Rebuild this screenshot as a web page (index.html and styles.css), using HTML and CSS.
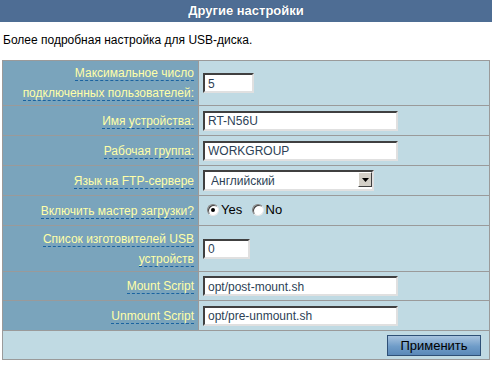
FILE: index.html
```html
<!DOCTYPE html>
<html lang="ru">
<head>
<meta charset="utf-8">
<link rel="stylesheet" href="styles.css">
</head>
<body>
<div class="header">Другие настройки</div>
<p class="desc">Более подробная настройка для USB-диска.</p>
<table class="form">
  <tr class="r1">
    <th><span class="lbl">Максимальное число подключенных пользователей:</span></th>
    <td><input class="txt w-s" type="text" value="5"></td>
  </tr>
  <tr class="r2">
    <th><span class="lbl">Имя устройства:</span></th>
    <td><input class="txt w-l" type="text" value="RT-N56U"></td>
  </tr>
  <tr class="r3">
    <th><span class="lbl">Рабочая группа:</span></th>
    <td><input class="txt w-l" type="text" value="WORKGROUP"></td>
  </tr>
  <tr class="r4">
    <th><span class="lbl">Язык на FTP-сервере</span></th>
    <td>
      <div class="sel">
        <select><option>Английский</option></select>
        <span class="arrow"><svg width="7" height="4" viewBox="0 0 7 4"><path d="M0 0h7L3.5 4z" fill="#000"/></svg></span>
      </div>
    </td>
  </tr>
  <tr class="r5">
    <th><span class="lbl">Включить мастер загрузки?</span></th>
    <td>
      <label class="radio first"><input type="radio" name="m" checked> Yes</label>
      <label class="radio"><input type="radio" name="m"> No</label>
    </td>
  </tr>
  <tr class="r6">
    <th><span class="lbl">Список изготовителей USB устройств</span></th>
    <td><input class="txt w-m" type="text" value="0"></td>
  </tr>
  <tr class="r7">
    <th><span class="lbl">Mount Script</span></th>
    <td><input class="txt w-l" type="text" value="opt/post-mount.sh"></td>
  </tr>
  <tr class="r8">
    <th><span class="lbl">Unmount Script</span></th>
    <td><input class="txt w-l" type="text" value="opt/pre-unmount.sh"></td>
  </tr>
  <tr class="r9">
    <td colspan="2" class="actions"><button class="apply">Применить</button></td>
  </tr>
</table>
</body>
</html>
```
FILE: styles.css
```css
html, body {
  margin: 0;
  padding: 0;
  background: #fff;
  font-family: "Liberation Sans", Arial, sans-serif;
  font-size: 12px;
  color: #000;
}
.header {
  height: 22px;
  line-height: 22px;
  background: #4e6d94;
  color: #fff;
  font-weight: bold;
  font-size: 13px;
  text-align: center;
  text-shadow: 0 0 1px #2c4566;
}
.desc {
  margin: 0;
  padding: 11px 0 0 3px;
  height: 27px;
  font-size: 12px;
}
.form {
  margin-left: 2px;
  width: 488px;
  border-collapse: collapse;
  border: 1px solid #999;
}
.form th, .form td {
  border: 1px solid #9a9a9a;
  padding: 0;
}
.form th {
  width: 191px;
  background: #7aa4bc;
  text-align: right;
  font-weight: normal;
  padding-right: 4px;
  line-height: 20px;
}
.form td {
  background: #c0dae3;
  padding-left: 4px;
}
.lbl {
  color: #ffffa8;
  border-bottom: 1px dashed #1a63a0;
}
.r1 { height: 45px; }
.r2 { height: 30px; }
.r3 { height: 30px; }
.r4 { height: 30px; }
.r5 { height: 30px; }
.r6 { height: 46px; }
.r7 { height: 29px; }
.r8 { height: 30px; }
.r9 { height: 29px; }
.txt {
  box-sizing: border-box;
  height: 20px;
  border: 2px solid #e0e0e0;
  border-top-color: #404040;
  border-left-color: #404040;
  font-family: "Liberation Sans", Arial, sans-serif;
  font-size: 12px;
  color: #2d3f56;
  padding: 1px 3px 0;
  margin: 0;
  display: block;
  background: #fff;
}
.w-s { width: 51px; }
.w-m { width: 47px; }
.w-l { width: 195px; }
.sel {
  position: relative;
  box-sizing: border-box;
  width: 171px;
  height: 21px;
  border: 2px solid #e0e0e0;
  border-top-color: #404040;
  border-left-color: #404040;
  background: #fff;
}
.sel select {
  appearance: none;
  -webkit-appearance: none;
  border: 0;
  background: transparent;
  font-family: "Liberation Sans", Arial, sans-serif;
  font-size: 12px;
  color: #2d3f56;
  width: 100%;
  height: 17px;
  padding: 0 0 0 6px;
  margin: 0;
  outline: none;
}
.sel .arrow {
  position: absolute;
  right: 0;
  top: 0;
  width: 14px;
  height: 15px;
  box-sizing: border-box;
  background: #d4d0c8;
  border: 1px solid #fff;
  border-right-color: #404040;
  border-bottom-color: #404040;
  display: flex;
  align-items: center;
  justify-content: center;
}
.radio {
  font-size: 13px;
  display: inline-flex;
  align-items: center;
  margin-right: 6px;
}
.radio.first {
  margin-left: 4px;
}
.radio input {
  appearance: none;
  -webkit-appearance: none;
  box-sizing: border-box;
  width: 12px;
  height: 12px;
  margin: 0 2px 0 0;
  border-radius: 50%;
  background: #fff;
  border: 1px solid #808080;
  border-right-color: #e8e8e8;
  border-bottom-color: #e8e8e8;
  box-shadow: inset 1px 1px 0 #404040;
  position: relative;
}
.radio input:checked::after {
  content: "";
  position: absolute;
  left: 3px;
  top: 3px;
  width: 4px;
  height: 4px;
  border-radius: 50%;
  background: #000;
}
.actions {
  text-align: right;
  padding-right: 8px !important;
}
.apply {
  width: 94px;
  height: 21px;
  border: 1px solid #2e5077;
  background: linear-gradient(#a8c4df, #6f9cc8 55%, #5a89b8);
  font-family: "Liberation Sans", Arial, sans-serif;
  font-size: 13px;
  color: #000;
  padding: 0;
  vertical-align: middle;
}
```
